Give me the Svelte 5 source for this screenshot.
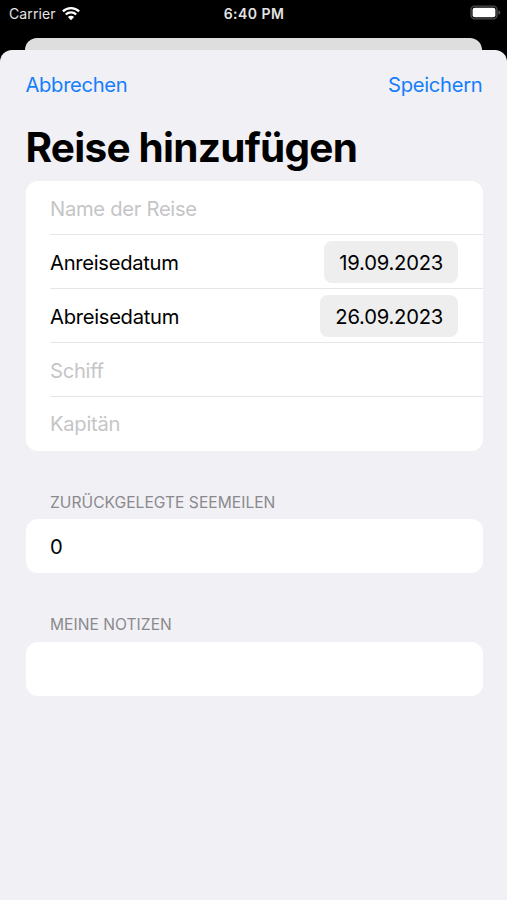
<script lang="ts">
	interface Row {
		id: string;
		label: string;
		date?: string;
		placeholder?: boolean;
	}

	const rows: Row[] = [
		{ id: 'name', label: 'Name der Reise', placeholder: true },
		{ id: 'arrival', label: 'Anreisedatum', date: '19.09.2023' },
		{ id: 'departure', label: 'Abreisedatum', date: '26.09.2023' },
		{ id: 'ship', label: 'Schiff', placeholder: true },
		{ id: 'captain', label: 'Kapitän', placeholder: true }
	];

	let miles = $state(0);
</script>

<div class="screen">
	<div class="status-bar">
		<div class="carrier">
			<span>Carrier</span>
			<svg class="wifi" viewBox="0 0 20 15" width="20" height="15">
				<path d="M1.9 5.4a11.6 11.6 0 0 1 16.2 0" />
				<path d="M4.8 8.5a7.4 7.4 0 0 1 10.4 0" />
				<path class="dot" d="M10 14.2 6.9 11.1a4.4 4.4 0 0 1 6.2 0Z" />
			</svg>
		</div>
		<span class="time">6:40 PM</span>
		<svg class="battery" viewBox="0 0 31 16" width="31" height="16">
			<rect class="shell" x="1" y="1.1" width="26" height="12.8" rx="3.8" />
			<rect class="charge" x="2.6" y="2.7" width="22.8" height="9.6" rx="2" />
			<path class="cap" d="M28.4 5.2c1.6.6 2 1.5 2 2.3s-.4 1.7-2 2.3Z" />
		</svg>
	</div>

	<div class="sheet-behind"></div>

	<main class="sheet">
		<nav>
			<button class="cancel">Abbrechen</button>
			<button class="save">Speichern</button>
		</nav>

		<h1>Reise hinzufügen</h1>

		<section class="card">
			{#each rows as row (row.id)}
				<div class="row">
					<span class="label" class:placeholder={row.placeholder}>{row.label}</span>
					{#if row.date}
						<button class="date">{row.date}</button>
					{/if}
				</div>
			{/each}
		</section>

		<h2>ZURÜCKGELEGTE SEEMEILEN</h2>
		<section class="card">
			<div class="row"><span class="label">{miles}</span></div>
		</section>

		<h2>MEINE NOTIZEN</h2>
		<section class="card">
			<div class="row"></div>
		</section>
	</main>
</div>

<style>
	:global(body) {
		background: #000;
	}

	.screen {
		display: flex;
		flex-direction: column;
		height: 900px;
		overflow: hidden;
		background: #000;
		font-family: Inter, 'Liberation Sans', sans-serif;
		color: #000;
	}

	.status-bar {
		display: grid;
		grid-template-columns: 1fr auto 1fr;
		align-items: center;
		height: 26px;
		margin-bottom: 12px;
		padding: 0 8px 0 9px;
		color: #e4e4e4;
		font-size: 14px;
	}

	.carrier {
		display: flex;
		align-items: center;
		gap: 5px;
		letter-spacing: 0.12px;
	}

	.time {
		font-size: 14px;
		font-weight: 600;
		letter-spacing: 0.45px;
	}

	.wifi {
		fill: none;
		stroke: #fff;
		stroke-width: 2.3;
	}

	.wifi .dot {
		fill: #fff;
		stroke: none;
	}

	.battery {
		justify-self: end;
		margin-right: -2px;
	}

	.shell {
		fill: none;
		stroke: #4d4d4d;
		stroke-width: 1.4;
	}

	.charge {
		fill: #fff;
	}

	.cap {
		fill: #4d4d4d;
	}

	.sheet-behind {
		height: 12px;
		margin: 0 25px;
		border-radius: 12px 12px 0 0;
		background: #dedede;
	}

	.sheet {
		flex: 1;
		padding: 0 24.5px 0 25.5px;
		border-radius: 12px 12px 0 0;
		background: #f1f0f5;
	}

	nav {
		display: flex;
		justify-content: space-between;
		align-items: center;
		height: 69px;
	}

	button {
		padding: 0;
		border: none;
		background: none;
		color: #157efb;
		font-family: inherit;
		font-size: 20.2px;
		cursor: pointer;
	}

	.cancel {
		letter-spacing: -0.34px;
	}

	.save {
		letter-spacing: -0.29px;
	}

	h1 {
		height: 62.4px;
		margin: 0;
		font-size: 40.5px;
		font-weight: 700;
		line-height: 58px;
		letter-spacing: -0.75px;
		white-space: nowrap;
	}

	.card {
		border-radius: 12px;
		background: #fff;
	}

	.row {
		display: flex;
		justify-content: space-between;
		align-items: center;
		box-sizing: border-box;
		height: 53.9px;
		margin-left: 24.5px;
		padding-top: 1px;
		padding-right: 24.5px;
		border-bottom: 1px solid #e6e6e7;
	}

	.row:last-child {
		border-bottom-color: transparent;
	}

	.label {
		font-size: 20.2px;
		letter-spacing: -0.29px;
	}

	.placeholder {
		color: #c5c5c7;
	}

	.date {
		height: 42px;
		padding: 0 15px;
		border-radius: 8px;
		background: #eeeeef;
		color: #000;
		letter-spacing: -0.22px;
	}

	h2 {
		height: 68.5px;
		margin: 0;
		padding: 42px 0 0 24.5px;
		box-sizing: border-box;
		color: #8a8a8e;
		font-size: 15.6px;
		font-weight: 400;
		line-height: 20px;
		letter-spacing: 0.02px;
	}
</style>
